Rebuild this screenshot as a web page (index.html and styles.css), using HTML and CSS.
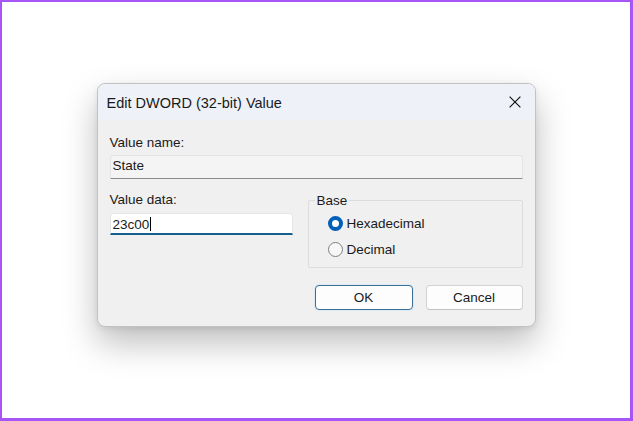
FILE: index.html
```html
<!DOCTYPE html>
<html lang="en">
<head>
<meta charset="utf-8">
<title>Edit DWORD (32-bit) Value</title>
<link rel="stylesheet" href="styles.css">
</head>
<body>
<div class="frame">
  <div class="dialog">
    <div class="titlebar">
      <span class="title">Edit DWORD (32-bit) Value</span>
      <span class="close">
        <svg width="12" height="12" viewBox="0 0 12 12" aria-hidden="true">
          <path d="M0.6 0.6 L11.4 11.4 M11.4 0.6 L0.6 11.4" stroke="#1b1b1b" stroke-width="1.25" fill="none"/>
        </svg>
      </span>
    </div>
    <div class="body">
      <div class="label">Value name:</div>
      <div class="field readonly">State</div>
      <div class="row">
        <div class="col-data">
          <div class="label">Value data:</div>
          <div class="field editable">23c00<span class="caret"></span></div>
        </div>
        <fieldset class="group">
          <legend>Base</legend>
          <div class="radio"><span class="dot checked"></span><span>Hexadecimal</span></div>
          <div class="radio"><span class="dot"></span><span>Decimal</span></div>
        </fieldset>
      </div>
      <div class="buttons">
        <div class="btn default">OK</div>
        <div class="btn">Cancel</div>
      </div>
    </div>
  </div>
</div>
</body>
</html>
```
FILE: styles.css
```css
html, body {
  margin: 0;
  padding: 0;
  background: #ffffff;
}
body {
  width: 633px;
  height: 421px;
  overflow: hidden;
  font-family: "Liberation Sans", Arial, sans-serif;
  font-size: 13.5px;
  line-height: 15px;
  color: #1a1a1a;
}
.frame {
  box-sizing: border-box;
  width: 633px;
  height: 421px;
  border-style: solid;
  border-color: #a855f7;
  border-width: 2px 3px 3px 2px;
  background: #ffffff;
  display: flex;
  align-items: center;
  justify-content: center;
  padding-bottom: 10px;
}
.dialog {
  box-sizing: border-box;
  width: 439px;
  border: 1px solid #c2c2c2;
  border-radius: 8px;
  background: #f0f0f0;
  overflow: hidden;
  box-shadow: 0 16px 34px rgba(0, 0, 0, 0.26), 0 2px 6px rgba(0, 0, 0, 0.08);
}
.titlebar {
  height: 36px;
  background: #eef2f8;
  display: flex;
  align-items: center;
  justify-content: space-between;
  padding-left: 9px;
  padding-top: 2px;
  box-sizing: border-box;
}
.title {
  font-size: 14.5px;
  line-height: 17px;
  color: #1a1a1a;
}
.close {
  width: 40px;
  height: 20px;
  display: flex;
  align-items: center;
  justify-content: center;
  margin-top: -2px;
}
.body {
  padding: 15px 12px 16px 12px;
}
.label {
  line-height: 15px;
}
.field {
  box-sizing: border-box;
  padding-left: 2px;
}
.readonly {
  margin-top: 5px;
  height: 24px;
  padding-top: 2px;
  background: #f4f4f4;
  border: 1px solid #e4e4e4;
  border-bottom-color: #8a8a8a;
  border-radius: 3px 3px 0 0;
}
.row {
  display: flex;
  gap: 15px;
  margin-top: 13px;
  align-items: flex-start;
}
.col-data {
  width: 183px;
}
.editable {
  margin-top: 6px;
  height: 22px;
  padding-top: 3px;
  background: #ffffff;
  border: 1px solid #e6e6e6;
  border-bottom: 2px solid #155e8e;
  border-radius: 3px 3px 0 0;
}
.caret {
  display: inline-block;
  width: 1px;
  height: 14px;
  background: #000000;
  vertical-align: -2px;
  margin-left: 1px;
}
.group {
  box-sizing: border-box;
  width: 215px;
  min-width: 0;
  margin: 0;
  margin-top: 0.5px;
  padding: 6px 10px 7px 6px;
  border: 1px solid #dcdcdc;
  border-radius: 2px;
}
.group legend {
  padding: 0 2px;
  line-height: 15px;
}
.radio {
  height: 20px;
  display: flex;
  align-items: center;
  gap: 4px;
  margin-left: 13px;
}
.radio + .radio {
  margin-top: 6px;
}
.dot {
  box-sizing: border-box;
  width: 15px;
  height: 15px;
  border-radius: 50%;
  border: 1px solid #7f7f7f;
  background: #f7f7f7;
  flex: none;
}
.dot.checked {
  border: 4.5px solid #005fb8;
  background: #ffffff;
}
.buttons {
  display: flex;
  justify-content: flex-end;
  gap: 13px;
  margin-top: 17px;
}
.btn {
  box-sizing: border-box;
  width: 97px;
  height: 25px;
  border: 1px solid #d2d2d2;
  border-bottom-color: #c2c2c2;
  border-radius: 4px;
  background: #fdfdfd;
  display: flex;
  align-items: center;
  justify-content: center;
}
.btn.default {
  width: 98px;
  border: 1px solid #3c6f95;
  box-shadow: 0 0 0 1px #dcebf6;
}
```
